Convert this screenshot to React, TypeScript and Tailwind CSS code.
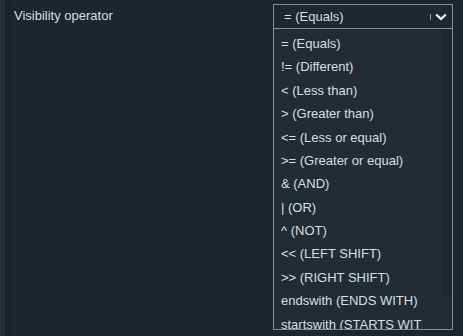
import React from "react";

const items = [
  "= (Equals)",
  "!= (Different)",
  "< (Less than)",
  "> (Greater than)",
  "<= (Less or equal)",
  ">= (Greater or equal)",
  "& (AND)",
  "| (OR)",
  "^ (NOT)",
  "<< (LEFT SHIFT)",
  ">> (RIGHT SHIFT)",
  "endswith (ENDS WITH)",
  "startswith (STARTS WITH)",
];

export default function App() {
  return (
    <div
      className="relative w-[463px] h-[336px] overflow-hidden bg-[#1c262c] text-[13px] text-[#dadee0] flex"
      style={{ fontFamily: '"Liberation Sans", Arial, sans-serif' }}
    >
      <div className="w-[5px] h-full bg-[#232f37]" />
      <div className="w-[8px] h-full bg-gradient-to-r from-[#172025] to-[#1c262c]" />
      <div className="flex-1 flex items-start justify-between pr-[10px] pt-[4px]">
        <div className="pt-[4px] pl-[1px] leading-[15px]">Visibility operator</div>
        <div className="w-[180px] h-[25px] border border-[#858d92] bg-[#1e282e] flex items-center pl-[10px] pr-[5px]">
          <span className="flex-1">= (Equals)</span>
          <span className="w-[1px] h-[6px] bg-[#9aa1a5] mr-[4px]" />
          <svg width="12" height="8" viewBox="0 0 12 8" className="mt-[1px]">
            <path d="M1.2 1.5 L6 6 L10.8 1.5" fill="none" stroke="#ffffff" strokeWidth="2.2" />
          </svg>
        </div>
      </div>
      <div className="absolute left-[273px] top-[28px] w-[180px] h-[302px] border border-[#858d92] bg-[#222d33] overflow-hidden flex">
        <div className="w-[167px] h-full overflow-hidden pt-[3px] pl-[7px]">
          {items.map((t) => (
            <div key={t} className="w-[141px] h-[23.4px] flex items-center whitespace-nowrap overflow-hidden">
              {t}
            </div>
          ))}
        </div>
        <div className="w-[11px] h-[267px] bg-[#1d272c] rounded-b-[4px]" />
      </div>
    </div>
  );
}
